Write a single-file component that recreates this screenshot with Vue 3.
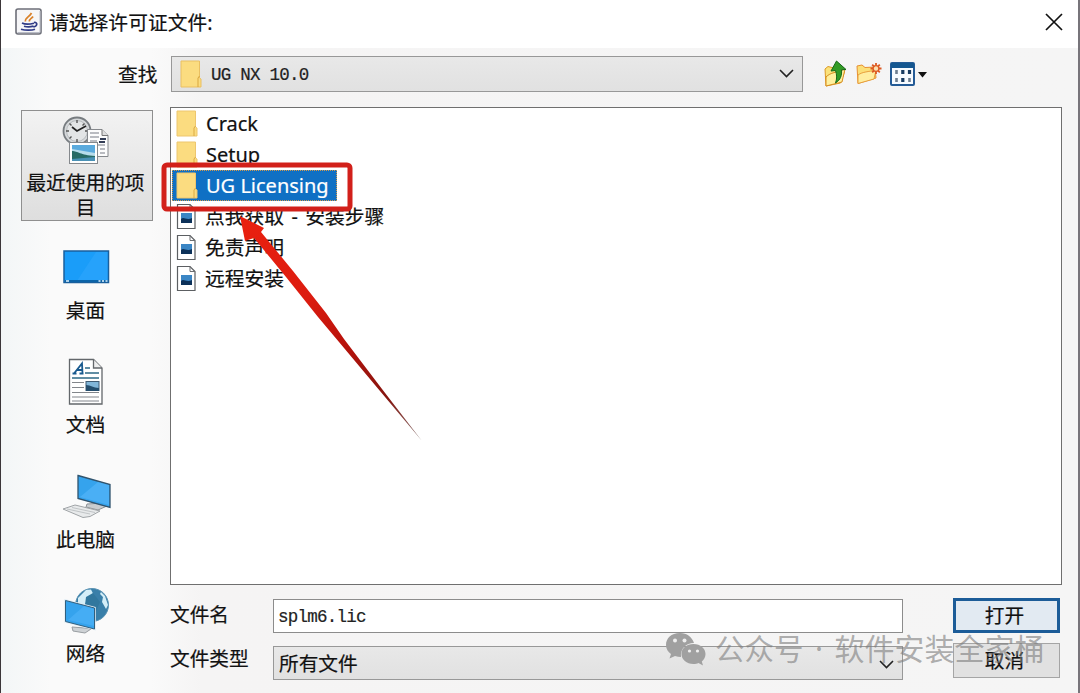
<script setup>
import { ref } from 'vue'

const places = [
	{ id: 'recent', label: '最近使用的项目' },
	{ id: 'desktop', label: '桌面' },
	{ id: 'docs', label: '文档' },
	{ id: 'computer', label: '此电脑' },
	{ id: 'network', label: '网络' },
]

const files = [
	{ name: 'Crack', type: 'folder' },
	{ name: 'Setup', type: 'folder' },
	{ name: 'UG Licensing', type: 'folder' },
	{ name: '点我获取 - 安装步骤', type: 'image' },
	{ name: '免责声明', type: 'image' },
	{ name: '远程安装', type: 'image' },
]

const activePlace = ref('recent')
const selected = ref('UG Licensing')
const fileName = ref('splm6.lic')
</script>

<template>
	<div class="dialog">
		<header class="titlebar">
			<svg class="java" width="27" height="27" viewBox="0 0 27 27">
				<rect x="1" y="1" width="25" height="25" rx="2" fill="#f6f6f8" stroke="#6d6f78" stroke-width="1.6" />
				<path d="M2.500 24.500H25V3" fill="none" stroke="#b9bcc6" />
				<path d="M10.500 13.500c-1-3.500 4-4.500 6-8.500M14.500 13.500c-1-2.500 2.500-3 3.500-5" fill="none" stroke="#d9822b" stroke-width="1.700" />
				<path d="M7 15c3 1.500 8 1.200 12 .2M9 18.200c3 .8 6 .8 9.500 0M19 14.500c4-.7 3.500 3.800-.5 4.500M6 21.300c4 1.200 11 1.200 14 0" fill="none" stroke="#2f3a86" stroke-width="1.700" />
			</svg>
			<span class="title">请选择许可证文件:</span>
			<svg class="close" width="18" height="18" viewBox="0 0 18 18">
				<path d="M1 1l16 16M17 1L1 17" stroke="#111" stroke-width="1.7" />
			</svg>
		</header>

		<div class="toolbar">
			<label class="look">查找</label>
			<div class="combo path">
				<svg class="foldericon" width="22" height="28" viewBox="0 0 22 28">
					<path d="M1 1h18.500v17l1.500 1v8H1z" fill="#fbdc80" stroke="#e9bf62" />
					<path d="M18 27v-9l1.500-2" fill="none" stroke="#d9a73e" />
				</svg>
				<span class="mono">UG NX 10.0</span>
				<svg class="chev" width="15" height="9" viewBox="0 0 15 9"><path d="M1 1l6.500 6.500L14 1" fill="none" stroke="#222" stroke-width="1.6" /></svg>
			</div>
			<div class="tools">
				<svg width="22" height="27" viewBox="0 0 22 27">
					<path d="M1 9l3-2.500 4 1 11-.5 1.500 5-4 11L2 26z" fill="#fbe27a" stroke="#dc9a25" />
					<path d="M2 26V17c5-5 10-4 19-8l-3 13z" fill="#fff09e" stroke="#d68d20" />
					<path d="M12.500 1L22 9.500l-4.500.3c.5 6-1 10-6 13.200 1.500-4 1.500-8 0-12.500L7 11z" fill="#329b25" stroke="#17681a" />
				</svg>
				<svg width="26" height="23" viewBox="0 0 26 23">
					<path d="M1 4l5-1 3 2.500 10-.5 1 11L2 21.500z" fill="#fbdf77" stroke="#e79032" />
					<path d="M2 21.500V13c5-3.500 10-3 18-5l-2 9z" fill="#ffeea0" stroke="#e89f3d" />
					<path d="M20 1v11M14.500 6.500h11M16.200 2.700l7.600 7.600M23.800 2.700l-7.600 7.600" stroke="#db5822" stroke-width="1.800" />
					<circle cx="20" cy="6.500" r="2.900" fill="#fbe0b0" stroke="#df5b22" stroke-width="1.400" />
				</svg>
				<svg width="37" height="24" viewBox="0 0 37 24">
					<rect x="1" y="1" width="23" height="22" rx="1" fill="#f7fbff" stroke="#245b96" stroke-width="2" />
					<path d="M1 3.500h23" stroke="#145790" stroke-width="5" />
					<path d="M6.500 8v4M6.500 16v4M19.500 16v4" stroke="#6d7e90" stroke-width="2.600" />
					<path d="M12.800 8v4M12.800 16v4M19.500 8v4" stroke="#173b61" stroke-width="3.200" />
					<path d="M28 10h9l-4.500 5.500z" fill="#111" />
				</svg>
			</div>
		</div>

		<div class="content">
			<nav class="places">
				<button v-for="p in places" :key="p.id" class="place" :class="{ active: p.id === activePlace }" @click="activePlace = p.id">
					<svg v-if="p.id === 'recent'" width="48" height="48" viewBox="0 0 48 48">
						<circle cx="15" cy="15" r="13.500" fill="#d5d8da" stroke="#777c80" stroke-width="1.800" />
						<circle cx="15" cy="15" r="10.500" fill="#e3e5e6" stroke="#b9bdc0" />
						<path d="M15 4v3M15 23v3M4 15h3M23 15h3M7.500 7.500l2 2M22.500 7.500l-2 2M7.500 22.500l2-2" stroke="#555" stroke-width="1.400" />
						<path d="M10 11l5 4 9-5" fill="none" stroke="#222" stroke-width="1.700" />
						<path d="M25.500 13.500H40l6 6v21H25.500z" fill="#fcfcfc" stroke="#85888c" />
						<path d="M40 13.500v6h6" fill="#ddd" stroke="#777" />
						<path d="M28 17h9M28 21h9M28 25h7M28 29h15M38 33h5M38 37h5" stroke="#777b84" />
						<path d="M38 23h6M37 26h6" stroke="#333d55" stroke-width="1.800" />
						<rect x="7.500" y="26.500" width="28" height="21" fill="#fff" stroke="#85898d" />
						<rect x="10" y="29" width="23" height="16" fill="#5aaadd" />
						<path d="M10 33l23 4v3H10z" fill="#b7dceb" />
						<path d="M10 35c6 0 8 4 23 5v5H10z" fill="#286b65" />
						<path d="M10 43l23-2v4H10z" fill="#4a91b5" />
					</svg>
					<svg v-else-if="p.id === 'desktop'" width="48" height="48" viewBox="0 0 48 48">
						<rect x="2" y="7" width="44.500" height="31.500" fill="#1a9df9" stroke="#1a5f9d" stroke-width="1.500" />
						<path d="M15 37L34 8h11.500v29z" fill="#3aabff" opacity=".4" />
						<path d="M3 37h43" stroke="#0c64a8" stroke-width="2" />
						<path d="M4 37h3M36.500 37h2M40 37h2M43.500 37h2" stroke="#dff3ff" stroke-width="1.500" />
					</svg>
					<svg v-else-if="p.id === 'docs'" width="48" height="48" viewBox="0 0 48 48">
						<path d="M7.500 1.500h24l8.500 8.500v36H7.500z" fill="#fff" stroke="#63676b" stroke-width="1.300" />
						<path d="M31.500 1.500V10H40" fill="#eee" stroke="#63676b" stroke-width="1.300" />
						<path d="M12 15.500l8-10 .5 10M14.500 12h6M10.500 15.500h4M17.500 15.500h4" fill="none" stroke="#195a8f" stroke-width="1.800" />
						<path d="M23 10h5M23 15h14M10 20h27" stroke="#2d6885" stroke-width="1.600" />
						<path d="M10 24.500h12M10 29.500h12M10 34.500h27M10 39h27M10 43h27" stroke="#82868b" stroke-width="1.200" />
						<rect x="24" y="23.500" width="13" height="9" fill="#81b6d9" stroke="#405c74" />
						<path d="M24 27c5 0 7 3 13 3v3H24z" fill="#244e6d" />
					</svg>
					<svg v-else-if="p.id === 'computer'" width="52" height="48" viewBox="0 0 52 48">
						<path d="M27 31l17-1 3 3-9 4-12-3z" fill="#c9cdd0" stroke="#8d9296" />
						<path d="M18 2.500l32 9v23l-32-9z" fill="#35a3ed" stroke="#30536d" stroke-width="1.300" />
						<path d="M20 24L38 9l11 3v20z" fill="#64beff" opacity=".45" />
						<path d="M3 36l12-4 25 6-10 5.500-7 1z" fill="#e8eaeb" stroke="#a0a4a7" />
						<path d="M7 36l23 5M12 34.500l23 5" stroke="#b6babd" stroke-width=".8" />
					</svg>
					<svg v-else width="48" height="48" viewBox="0 0 48 48">
						<circle cx="30" cy="18" r="16.500" fill="#397fa9" stroke="#5d94b4" />
						<path d="M16 11l8-8 5-.5 2 4-5 4-3 7-7 2zM39 5l4 4 3 9-2 4-4-7 1-5-3-3z" fill="#d4eef8" />
						<path d="M24 10l7-4 7 9-5 12-10-9z" fill="#31779e" />
						<path d="M10 40l13 1 6 1-6 4-12-2z" fill="#ced2d5" stroke="#999ea2" />
						<path d="M3.500 13.500l29 7.500v21l-29-7.500z" fill="#35a3ed" stroke="#e2edf4" stroke-width="2.500" />
						<path d="M3.500 13.500l29 7.500v21l-29-7.500z" fill="#35a3ed" stroke="#315f7e" />
						<path d="M6 33L22 19l10 3v17z" fill="#60bbff" opacity=".4" />
					</svg>
					<span>{{ p.label }}</span>
				</button>
			</nav>

			<section class="main">
				<ul class="files">
					<li v-for="f in files" :key="f.name" :class="[f.type, { selected: f.name === selected }]" @click="selected = f.name">
						<svg v-if="f.type === 'folder'" width="22" height="27" viewBox="0 0 22 27">
							<path d="M1 1h18.500v16l1.500 1v8H1z" fill="#fbdc80" stroke="#edc66e" />
							<path d="M18 26v-8l1.500-2" fill="none" stroke="#dcaa43" />
						</svg>
						<svg v-else width="22" height="27" viewBox="0 0 22 27">
							<path d="M1.500 1.500H14l5 5v19H1.500z" fill="#fff" stroke="#5c5f62" stroke-width="1.200" />
							<path d="M14 1.500v5h5" fill="none" stroke="#6c6f72" />
							<rect x="5" y="10" width="11" height="10" fill="#3b86c5" />
							<path d="M5 16c3-3 5 2 11-1v5H5z" fill="#0c3159" />
						</svg>
						<span>{{ f.name }}</span>
					</li>
				</ul>

				<div class="form">
					<div class="labels">
						<label>文件名</label>
						<label>文件类型</label>
					</div>
					<div class="fields">
						<input v-model="fileName" class="mono" type="text" spellcheck="false" />
						<div class="combo filetype">
							<span>所有文件</span>
							<svg class="chev" width="15" height="9" viewBox="0 0 15 9"><path d="M1 1l6.500 6.500L14 1" fill="none" stroke="#222" stroke-width="1.6" /></svg>
						</div>
					</div>
					<div class="actions">
						<button class="btn primary">打开</button>
						<button class="btn">取消</button>
					</div>
				</div>
			</section>
		</div>

		<!-- red marker around the folder to open -->
		<svg class="marker" width="270" height="290" viewBox="0 0 270 290">
			<defs>
				<linearGradient id="tail" gradientUnits="userSpaceOnUse" x1="85" y1="60" x2="262" y2="282">
					<stop offset="0" stop-color="#e9200f" />
					<stop offset=".35" stop-color="#dc1c10" />
					<stop offset=".55" stop-color="#b9120b" />
					<stop offset=".8" stop-color="#84150f" />
					<stop offset="1" stop-color="#8a7c7a" />
				</linearGradient>
			</defs>
			<rect x="3" y="4" width="186" height="44" rx="3" fill="none" stroke="#d2201a" stroke-width="5" />
			<path d="M79 55L103 67 100 71 132 110 165 152 183 178 221 228 261 280 219 230 178 181 157 156 125 116 93 77 84 80z" fill="url(#tail)" />
		</svg>

		<div class="watermark">
			<svg width="41" height="34" viewBox="0 0 41 34">
				<path d="M15 1C6 1 1 6.500 1 13c0 4 2 7 5 9l-1.500 4.500L10 24c2 .7 4 1 6 1-1-8 5-14 13-14C27 5 22 1 15 1z" />
				<path d="M28.500 12C21 12 16.500 16.500 16.500 22s5 10 12 10c2 0 3.500-.3 5-1l4.500 2.500-1.200-4C39 27.500 40.500 25 40.500 22c0-5.500-5-10-12-10z" />
				<g class="eyes">
					<circle cx="10" cy="8.500" r="2" /><circle cx="19.500" cy="8.500" r="2" />
					<circle cx="24.500" cy="19" r="1.600" /><circle cx="32.500" cy="19" r="1.600" />
				</g>
			</svg>
			<span class="kind">公众号</span>
			<span class="dot">·</span>
			<span>软件安装全家桶</span>
		</div>
	</div>
</template>

<style>
body {
	margin: 0;
	overflow: hidden;
}
</style>

<style scoped>
.dialog {
	position: relative;
	box-sizing: border-box;
	width: 1080px;
	height: 693px;
	overflow: hidden;
	border-left: 1px solid #3b3639;
	border-right: 2px solid #77747a;
	background: linear-gradient(90deg, #f3f6f7 0, #fafafa 50px, #fafafa 150px, #f5f4f4 200px, #f5f5f5 100%);
	color: #111;
	font-family: "Noto Sans", "Noto Sans CJK SC", sans-serif;
	font-size: 19.7px;
	-webkit-text-stroke: 0.2px;
}

svg {
	display: block;
	flex: none;
}

.titlebar {
	display: flex;
	align-items: center;
	box-sizing: border-box;
	height: 48px;
	padding: 0 15px 5px 14px;
	background: #fff;
}

.title {
	margin-left: 7px;
}

.title {
	letter-spacing: 0.1px;
}

.close {
	margin-left: auto;
}

.toolbar {
	display: flex;
	align-items: center;
	height: 51px;
	padding-bottom: 8px;
}

.look {
	width: 39px;
	margin-left: 117px;
	white-space: nowrap;
}

.combo {
	display: flex;
	align-items: center;
	box-sizing: border-box;
	border: 1px solid #989898;
	background: linear-gradient(#e8e8e8, #e1e1e1);
}

.path {
	width: 632px;
	height: 36px;
	margin-left: 14px;
	padding: 0 8px 0 8px;
}

.path .mono {
	margin: 2px 0 0 9px;
}

.mono {
	font-family: "Liberation Mono", monospace;
	font-size: 17.5px;
	letter-spacing: -0.75px;
	color: #222;
}

.chev {
	margin-left: auto;
}

.tools {
	display: flex;
	align-items: center;
	gap: 10px;
	margin-left: 21px;
}

.tools svg:last-child {
	margin-left: -2px;
}

.content {
	display: flex;
}

.places {
	display: flex;
	flex-direction: column;
	gap: 3.5px;
	width: 132px;
	padding: 3px 16px 0 20px;
}

.place {
	display: flex;
	flex-direction: column;
	align-items: center;
	gap: 6px;
	box-sizing: border-box;
	height: 111px;
	padding: 18px 4px 0 1px;
	border: 1px solid transparent;
	background: none;
	color: inherit;
	font: inherit;
	line-height: 25px;
}

.place.active {
	padding-top: 5px;
	border-color: #8f8f8f;
	background: linear-gradient(#f2f2f2, #dedede);
}

.main {
	width: 892px;
	margin-left: 1px;
}

.files {
	box-sizing: border-box;
	height: 478px;
	margin: 0;
	padding: 0 0 0 1px;
	border: 1px solid #6f6f6f;
	background: #fff;
	list-style: none;
}

.files li {
	display: flex;
	align-items: center;
	gap: 8px;
	box-sizing: border-box;
	width: max-content;
	height: 31px;
	padding: 0 8px 0 4px;
	font-size: 20px;
	line-height: 31px;
	white-space: nowrap;
}

.files .image {
	gap: 7px;
	font-size: 19.8px;
	word-spacing: 2.2px;
}

.files .selected {
	border: 1px dotted #d59a4b;
	padding: 0 7px 0 3px;
	background: #0f70c4;
	color: #fff;
}

.form {
	display: flex;
	padding-top: 13px;
}

.labels {
	display: flex;
	flex-direction: column;
	width: 103px;
	line-height: 44px;
	margin-top: -5px;
}

.fields {
	display: flex;
	flex-direction: column;
	gap: 13px;
	width: 630px;
	padding-top: 1px;
}

.fields input {
	box-sizing: border-box;
	width: 100%;
	height: 34px;
	padding: 2px 4px 0;
	border: 1px solid #8c8c8c;
	border-radius: 0;
	outline: none;
	background: #fff;
	-webkit-text-stroke: 0.2px;
}

.filetype {
	height: 34px;
	padding: 0 8px 2px 5px;
}

.filetype .chev {
	margin-top: 5px;
}

.actions {
	display: flex;
	flex-direction: column;
	gap: 10px;
	margin-left: 50px;
}

.btn {
	box-sizing: border-box;
	width: 107px;
	height: 35px;
	padding: 0 4px 0 0;
	border: 1px solid #a5a5a5;
	background: #e1e1e1;
	color: #111;
	font: inherit;
	line-height: 30px;
}

.btn.primary {
	border: 3px solid #1c5c98;
	background: #e2eaf2;
}

.marker {
	position: absolute;
	left: 160px;
	top: 161px;
}

.watermark {
	position: absolute;
	left: 664px;
	top: 629px;
	display: flex;
	align-items: center;
	height: 40px;
	color: rgba(125, 125, 125, 0.62);
	font-size: 30px;
	line-height: 40px;
	white-space: nowrap;
	-webkit-text-stroke: 0;
}

.watermark svg {
	fill: #a0a0a0;
}

.watermark .eyes {
	fill: #eee;
}

.kind {
	margin-left: 9px;
	font-size: 29.5px;
}

.dot {
	width: 31px;
	text-align: center;
}
</style>
